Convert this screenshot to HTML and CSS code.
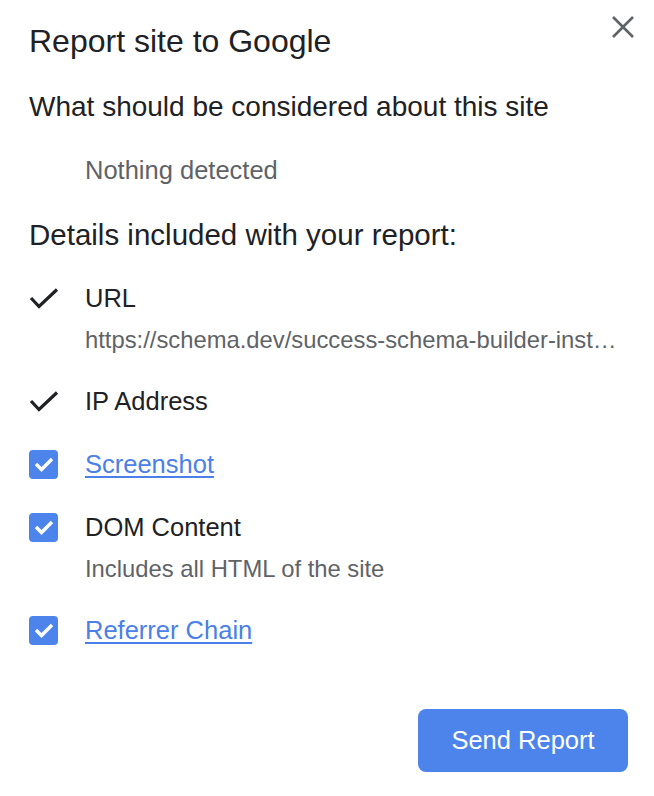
FILE: index.html
```html
<!DOCTYPE html>
<html>
<head>
<meta charset="utf-8">
<link rel="stylesheet" href="styles.css">
</head>
<body>
<div class="dialog">
  <button class="close" aria-label="Close">
    <svg width="24" height="24" viewBox="0 0 24 24"><path d="M2 2 L22 22 M22 2 L2 22" stroke="#5f6368" stroke-width="2.6" fill="none"/></svg>
  </button>
  <h1 class="title">Report site to Google</h1>
  <h2 class="section">What should be considered about this site</h2>
  <p class="nothing">Nothing detected</p>
  <h2 class="section details">Details included with your report:</h2>
  <ul class="items">
    <li class="item">
      <span class="icon"><svg width="30" height="22" viewBox="0 0 30 22"><path d="M2 11 L10 19.5 L28 2.5" stroke="#202124" stroke-width="3.2" fill="none"/></svg></span>
      <div class="body">
        <div class="label">URL</div>
        <div class="sub url">https://schema.dev/success-schema-builder-inst…</div>
      </div>
    </li>
    <li class="item">
      <span class="icon"><svg width="30" height="22" viewBox="0 0 30 22"><path d="M2 11 L10 19.5 L28 2.5" stroke="#202124" stroke-width="3.2" fill="none"/></svg></span>
      <div class="body"><div class="label">IP Address</div></div>
    </li>
    <li class="item">
      <span class="icon"><span class="box"><svg width="20" height="16" viewBox="0 0 20 16"><path d="M2 8 L7.5 13.5 L18 3" stroke="#fff" stroke-width="3.4" fill="none"/></svg></span></span>
      <div class="body"><a class="label link" href="#">Screenshot</a></div>
    </li>
    <li class="item">
      <span class="icon"><span class="box"><svg width="20" height="16" viewBox="0 0 20 16"><path d="M2 8 L7.5 13.5 L18 3" stroke="#fff" stroke-width="3.4" fill="none"/></svg></span></span>
      <div class="body">
        <div class="label">DOM Content</div>
        <div class="sub">Includes all HTML of the site</div>
      </div>
    </li>
    <li class="item">
      <span class="icon"><span class="box"><svg width="20" height="16" viewBox="0 0 20 16"><path d="M2 8 L7.5 13.5 L18 3" stroke="#fff" stroke-width="3.4" fill="none"/></svg></span></span>
      <div class="body"><a class="label link" href="#">Referrer Chain</a></div>
    </li>
  </ul>
  <div class="actions"><button class="send">Send Report</button></div>
</div>
</body>
</html>
```
FILE: styles.css
```css
* { box-sizing: border-box; }
html, body { margin: 0; background: #fff; }
body { font-family: "Liberation Sans", Arial, sans-serif; color: #202124; }
.dialog { position: relative; width: 654px; height: 796px; padding: 24px 20px 0 29px; }
.close { position: absolute; top: 15px; right: 19px; width: 24px; height: 24px; padding: 0; border: 0; background: none; }
.close svg { display: block; }
.title { margin: 0; font-size: 32px; font-weight: 400; line-height: 34px; }
.section { margin: 0; font-size: 28px; font-weight: 400; line-height: 34px; }
.title + .section { margin-top: 32px; }
.nothing { margin: 31px 0 0 56px; font-size: 25.5px; line-height: 30px; color: #5f6368; }
.details { margin-top: 33px; font-size: 29.5px; }
.items { list-style: none; margin: 30px 0 0; padding: 0; display: flex; flex-direction: column; gap: 31px; }
.item { display: flex; align-items: flex-start; }
.icon { width: 56px; flex: none; height: 32px; display: flex; align-items: center; }
.box { width: 29px; height: 29px; border-radius: 4px; background: #4d84ec; display: flex; align-items: center; justify-content: center; }
.body { min-width: 0; flex: 1; }
.label { font-size: 25.5px; line-height: 32px; color: #202124; display: inline-block; }
.link { color: #4a80e8; text-decoration: underline; text-underline-offset: 3px; text-decoration-thickness: 2px; }
.sub { margin-top: 12px; font-size: 23.8px; line-height: 28px; color: #5f6368; white-space: nowrap; }
.actions { position: absolute; right: 26px; bottom: 24px; }
.send { width: 210px; height: 63px; border: 0; border-radius: 8px; background: #4d84ec; color: #fff; font-family: "Liberation Sans", Arial, sans-serif; font-size: 25.5px; }
```
